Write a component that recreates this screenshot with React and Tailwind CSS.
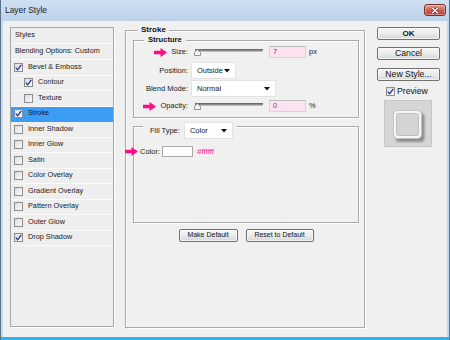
import React from "react";

const F = { fontFamily: '"Liberation Sans", Arial, sans-serif' };

function Check() {
  return (
    <svg width="7" height="7" viewBox="0 0 7 7">
      <path d="M0.8 3.6 L2.7 5.8 L6.3 0.8" stroke="#1e3591" strokeWidth="1.3" fill="none" />
    </svg>
  );
}

function Checkbox({ checked }) {
  return (
    <span className="flex h-[9px] w-[9px] shrink-0 items-center justify-center border border-[#8d8d8d] bg-gradient-to-br from-[#dcdcdc] to-[#fbfbfb]">
      {checked && <Check />}
    </span>
  );
}

function Arrow() {
  return (
    <svg width="13" height="9" viewBox="0 0 13 9" className="shrink-0">
      <path d="M0 2.8 H6.5 V0 L13 4.5 L6.5 9 V6.2 H0 Z" fill="#ff0d86" />
    </svg>
  );
}

function Slider() {
  return (
    <svg width="70" height="10" viewBox="0 0 70 10" className="shrink-0">
      <rect x="2" y="2" width="68" height="2.6" rx="1.3" fill="#8a8a8a" />
      <rect x="2" y="2" width="68" height="1" rx="0.5" fill="#6d6d6d" />
      <path d="M1.5 8.5 V5.5 L4.5 2.5 L7.5 5.5 V8.5 Z" fill="#f3f3f3" stroke="#7b7b7b" strokeWidth="0.8" />
    </svg>
  );
}

function Caret() {
  return (
    <svg width="6" height="4" viewBox="0 0 6 4" className="shrink-0">
      <path d="M0 0 H6 L3 3.5 Z" fill="#111" />
    </svg>
  );
}

function Select({ w, label }) {
  return (
    <div
      className="flex h-[17px] shrink-0 items-center justify-between border border-[#e3e3e3] bg-white pl-[5px] pr-[5px] text-[7.5px] text-[#222]"
      style={{ width: w }}
    >
      <span>{label}</span>
      <Caret />
    </div>
  );
}

function PinkInput({ value }) {
  return (
    <div className="flex h-[12px] w-[37px] shrink-0 items-center border border-[#d6d6d6] border-t-[#bdbdbd] bg-[#fce3ef] pl-[3px] text-[7.5px] text-[#7a4470]">
      {value}
    </div>
  );
}

function Btn({ w, children, def }) {
  return (
    <div
      className={
        "flex h-[13px] shrink-0 items-center justify-center rounded-[2px] border bg-gradient-to-b from-[#f7f7f7] via-[#ebebeb] to-[#d6d6d6] shadow-[inset_0_0_0_1px_#ffffffaa] " +
        (def ? "border-[#3c7fb1] shadow-[inset_0_0_0_1px_#aee1f7]" : "border-[#707070]")
      }
      style={{ width: w }}
    >
      {children}
    </div>
  );
}

const rows = [
  { label: "Bevel & Emboss", cb: true, checked: true },
  { label: "Contour", cb: true, checked: true, indent: true },
  { label: "Texture", cb: true, checked: false, indent: true },
  { label: "Stroke", cb: true, checked: true, active: true },
  { label: "Inner Shadow", cb: true },
  { label: "Inner Glow", cb: true },
  { label: "Satin", cb: true },
  { label: "Color Overlay", cb: true },
  { label: "Gradient Overlay", cb: true },
  { label: "Pattern Overlay", cb: true },
  { label: "Outer Glow", cb: true },
  { label: "Drop Shadow", cb: true, checked: true },
];

export default function App() {
  return (
    <div
      className="flex h-[340px] w-[450px] flex-col overflow-hidden border-l border-r border-[#5d7389] bg-[#c3d7ee]"
      style={F}
    >
      {/* Title bar */}
      <div className="flex h-[21px] shrink-0 items-start justify-between bg-gradient-to-b from-[#cfe0f3] to-[#bdd2ea]">
        <div className="pl-[4px] pt-[5px] text-[8.4px] leading-[10px] text-[#1b1b1b]">Layer Style</div>
        <div className="mr-[3px] mt-[4px] flex h-[12px] w-[22px] items-center justify-center rounded-[3px] border border-[#7d3129] bg-gradient-to-b from-[#e4a79e] via-[#cf5e52] to-[#b9423a] shadow-[inset_0_0_0_1px_#f2c4bd88]">
          <svg width="8" height="7" viewBox="0 0 8 7">
            <path d="M1 0.8 L7 6.2 M7 0.8 L1 6.2" stroke="#5a1d18" strokeWidth="2.6" />
            <path d="M1 0.8 L7 6.2 M7 0.8 L1 6.2" stroke="#ffffff" strokeWidth="1.5" />
          </svg>
        </div>
      </div>

      {/* Body */}
      <div className="mx-[2px] flex h-[316px] shrink-0 items-start bg-[#f0f0f0] pl-[7px] pt-[6px]">
        {/* Left styles list */}
        <div className="flex h-[300px] w-[104px] shrink-0 flex-col border border-[#a6a6a6] bg-[#eeeeee] shadow-[1px_1px_0_#ffffff] text-[7.3px] text-[#1a1a1a]">
          <div className="flex h-[16px] shrink-0 items-center border-b border-[#fbfbfb] pl-[4px]">Styles</div>
          <div className="flex h-[16px] shrink-0 items-center border-b border-[#fbfbfb] pl-[4px]">Blending Options: Custom</div>
          {rows.map((r) => (
            <div
              key={r.label}
              className={
                "flex h-[15.5px] shrink-0 items-center gap-[5px] border-b " +
                (r.active ? "border-[#3d9df5] bg-[#3d9df5]" : "border-[#fbfbfb]") +
                (r.indent ? " pl-[13px]" : " pl-[3px]")
              }
            >
              <Checkbox checked={r.checked} />
              <span>{r.label}</span>
            </div>
          ))}
        </div>

        {/* Main */}
        <div className="relative ml-[11px] mt-[3px] flex h-[298px] w-[240px] shrink-0 flex-col border border-[#a9a9a9] pl-[7px] pr-[6px] pt-[9px] shadow-[inset_1px_1px_0_#ffffff,1px_1px_0_#ffffff]">
          <div className="absolute left-[12px] top-[-6px] bg-[#f0f0f0] px-[3px] text-[8px] font-bold leading-[10px] text-[#111]">Stroke</div>

          {/* Structure */}
          <div className="relative flex h-[78px] w-[226px] shrink-0 flex-col border border-[#a9a9a9] pt-[5px] shadow-[inset_1px_1px_0_#ffffff,1px_1px_0_#ffffff] text-[7.5px] text-[#1a1a1a]">
            <div className="absolute left-[10px] top-[-6px] bg-[#f0f0f0] px-[4px] text-[7.6px] font-bold leading-[10px] text-[#111]">Structure</div>

            <div className="flex h-[12px] items-center">
              <div className="flex w-[54px] shrink-0 items-center justify-end gap-[4px]">
                <Arrow />
                <span>Size:</span>
              </div>
              <div className="ml-[5px]"><Slider /></div>
              <div className="ml-[6px]"><PinkInput value="7" /></div>
              <span className="ml-[3px]">px</span>
            </div>

            <div className="mt-[4px] flex h-[18px] items-start">
              <div className="flex h-[17px] w-[54px] shrink-0 items-center justify-end">Position:</div>
              <div className="ml-[3px]"><Select w={45} label="Outside" /></div>
            </div>

            <div className="flex h-[17px] items-start">
              <div className="flex h-[17px] w-[54px] shrink-0 items-center justify-end">Blend Mode:</div>
              <div className="ml-[3px]"><Select w={85} label="Normal" /></div>
            </div>

            <div className="mt-[3px] flex h-[12px] items-center">
              <div className="flex w-[54px] shrink-0 items-center justify-end gap-[4px]">
                <Arrow />
                <span>Opacity:</span>
              </div>
              <div className="ml-[5px]"><Slider /></div>
              <div className="ml-[6px]"><PinkInput value="0" /></div>
              <span className="ml-[3px]">%</span>
            </div>
          </div>

          {/* Fill Type */}
          <div className="relative mt-[8px] flex h-[97px] w-[226px] shrink-0 flex-col border border-[#a9a9a9] pl-[6px] pt-[19px] shadow-[inset_1px_1px_0_#ffffff,1px_1px_0_#ffffff] text-[7.5px] text-[#1a1a1a]">
            <div className="absolute left-[9px] top-[-5px] flex items-center gap-[4px] bg-[#f0f0f0] px-[7px] pr-[4px]">
              <span>Fill Type:</span>
              <Select w={49} label="Color" />
            </div>
            <div className="relative flex h-[11px] items-center">
              <div className="absolute left-[-15px] top-[1px]"><Arrow /></div>
              <span>Color:</span>
              <div className="ml-[2px] h-[11px] w-[31px] border border-[#a8a8a8] bg-white" />
              <span className="ml-[4px] text-[8px] text-[#ff2a93]">#ffffff</span>
            </div>
          </div>

          <div className="mt-[6px] flex w-[226px] justify-center gap-[8px] text-[7px] text-[#111]">
            <Btn w={59}>Make Default</Btn>
            <Btn w={68}>Reset to Default</Btn>
          </div>
        </div>

        {/* Right column */}
        <div className="ml-[12px] flex w-[63px] shrink-0 flex-col text-[8.7px] text-[#111]">
          <Btn w={63} def><span className="font-bold text-[8px]">OK</span></Btn>
          <div className="mt-[7px]"><Btn w={63}>Cancel</Btn></div>
          <div className="mt-[8px]"><Btn w={63}>New Style...</Btn></div>
          <div className="ml-[9px] mt-[6px] flex h-[9px] items-center gap-[2px]">
            <Checkbox checked />
            <span className="leading-[9px]">Preview</span>
          </div>
          <div className="ml-[7px] mt-[4px] h-[47px] w-[48px] border border-[#c6c6c6] bg-[#d6d6d6]">
            <svg width="46" height="45" viewBox="0 0 46 45">
              <defs>
                <filter id="sh" x="-30%" y="-30%" width="160%" height="160%">
                  <feGaussianBlur stdDeviation="1.3" />
                </filter>
              </defs>
              <rect x="10.5" y="12" width="29" height="29" rx="4" fill="#8e8e8e" filter="url(#sh)" />
              <rect x="8.5" y="9.5" width="28" height="28" rx="4" fill="#f6f6f6" stroke="#bcbcbc" strokeWidth="0.8" />
              <rect x="11.5" y="12.5" width="22" height="22" rx="2" fill="#d4d4d4" stroke="#b4b4b4" strokeWidth="0.8" />
            </svg>
          </div>
        </div>
      </div>
      <div className="h-[3px] shrink-0 bg-[#2cb6e6]" />
    </div>
  );
}
